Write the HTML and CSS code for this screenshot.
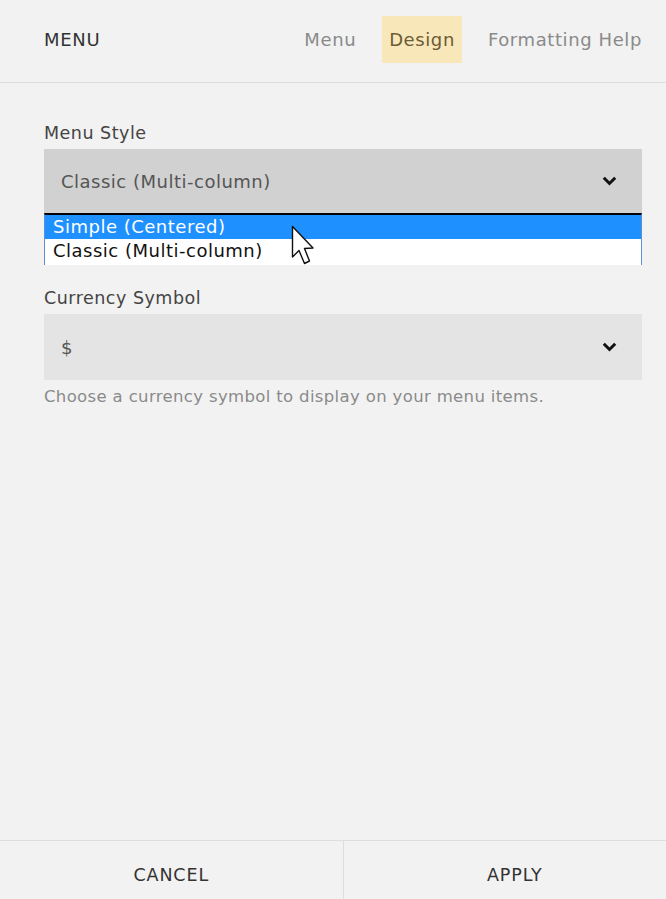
FILE: index.html
```html
<!DOCTYPE html>
<html>
<head>
<meta charset="utf-8">
<link rel="stylesheet" href="styles.css">
</head>
<body>
<div class="panel">
  <header class="header">
    <div class="title">MENU</div>
    <nav class="tabs">
      <span class="tab">Menu</span>
      <span class="tab active">Design</span>
      <span class="tab">Formatting Help</span>
    </nav>
  </header>
  <main class="content">
    <div class="field">
      <div class="label">Menu Style</div>
      <div class="select-wrap">
        <div class="select open">
          <span>Classic (Multi-column)</span>
          <svg class="chev" width="15" height="10" viewBox="0 0 15 10"><path d="M1.8 1.8 L7.5 7.5 L13.2 1.8" fill="none" stroke="#111" stroke-width="3"/></svg>
        </div>
        <ul class="options">
          <li class="opt selected">Simple (Centered)</li>
          <li class="opt">Classic (Multi-column)</li>
        </ul>
        <svg class="cursor" width="26" height="42" viewBox="0 0 26 42"><path d="M1.5 1.5 L1.5 32 L8 25.5 L13.5 38.5 L18.5 36 L13.5 23.5 L22 23 Z" fill="#fff" stroke="#111" stroke-width="1.4" stroke-linejoin="round"/></svg>
      </div>
    </div>
    <div class="field second">
      <div class="label">Currency Symbol</div>
      <div class="select">
        <span>$</span>
        <svg class="chev" width="15" height="10" viewBox="0 0 15 10"><path d="M1.8 1.8 L7.5 7.5 L13.2 1.8" fill="none" stroke="#111" stroke-width="3"/></svg>
      </div>
      <div class="help">Choose a currency symbol to display on your menu items.</div>
    </div>
  </main>
  <footer class="footer">
    <div class="btn">CANCEL</div>
    <div class="btn">APPLY</div>
  </footer>
</div>
</body>
</html>
```
FILE: styles.css
```css
* { box-sizing: border-box; }
html, body { margin: 0; padding: 0; }
body {
  background: #f2f2f2;
  font-family: "DejaVu Sans", "Liberation Sans", sans-serif;
  color: #333;
  overflow: hidden;
}
.panel {
  width: 686px;
  height: 908px;
  display: flex;
  flex-direction: column;
}
.header {
  height: 83px;
  border-bottom: 1px solid #dedede;
  display: flex;
  align-items: center;
  justify-content: space-between;
  padding: 0 37px 3px 44px;
}
.title {
  font-size: 18px;
  letter-spacing: 0.7px;
  color: #333;
}
.tabs {
  display: flex;
  align-items: center;
  gap: 19px;
}
.tab {
  height: 47px;
  display: flex;
  align-items: center;
  padding: 0 7px;
  font-size: 18px;
  letter-spacing: 0.6px;
  color: #8a8a8a;
}
.tab.active {
  background: #f8e7b9;
  color: #6b5b36;
}
.content {
  flex: 1;
  padding: 38px 44px 0 44px;
}
.label {
  font-size: 17.5px;
  letter-spacing: 0.5px;
  color: #444;
  line-height: 24px;
  margin-bottom: 4px;
}
.select-wrap { position: relative; }
.select {
  height: 66px;
  background: #e4e4e4;
  display: flex;
  align-items: center;
  justify-content: space-between;
  padding: 0 25px 0 17px;
  font-size: 18px;
  letter-spacing: 0.5px;
  color: #555;
}
.select.open { background: #d1d1d1; height: 64px; }
.options {
  position: absolute;
  left: 0;
  right: 0;
  top: 100%;
  margin: 0;
  padding: 0;
  list-style: none;
  background: #fff;
  border-top: 2px solid #000;
  border-left: 1px solid #5b8fd6;
  border-right: 1px solid #5b8fd6;
  height: 52px;
}
.opt {
  height: 24px;
  line-height: 24px;
  padding-left: 8px;
  font-size: 18px;
  letter-spacing: 0.5px;
  color: #111;
}
.opt.selected {
  background: #1e90ff;
  color: #fff;
}
.cursor {
  position: absolute;
  left: 247px;
  top: 76px;
}
.field.second { margin-top: 73px; }
.help {
  margin-top: 6px;
  font-size: 16.5px;
  letter-spacing: 0.35px;
  color: #8a8a8a;
  line-height: 22px;
}
.footer {
  height: 68px;
  border-top: 1px solid #dedede;
  display: flex;
}
.btn {
  flex: 1;
  display: flex;
  align-items: center;
  justify-content: center;
  font-size: 17.5px;
  color: #333;
  letter-spacing: 0.9px;
}
.btn + .btn { border-left: 1px solid #dedede; }
```
